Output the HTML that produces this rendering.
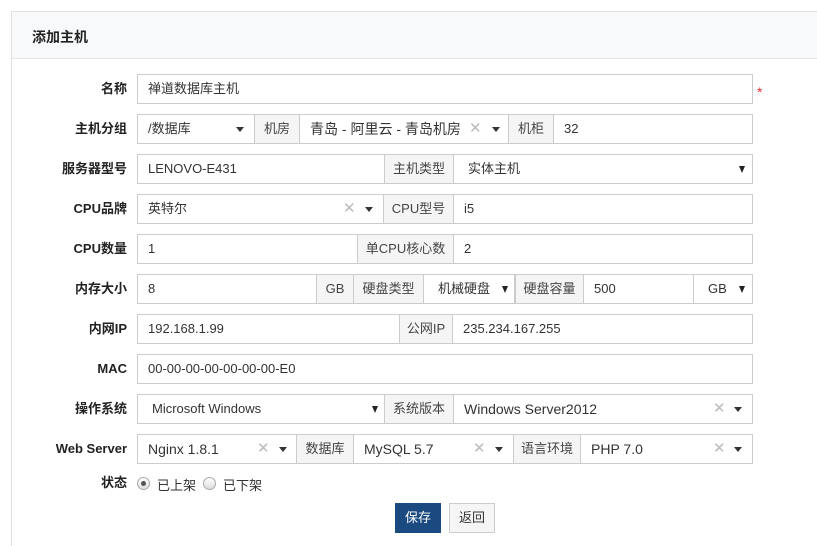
<!DOCTYPE html><html><head><meta charset="utf-8"><style>
html,body{margin:0;width:817px;height:546px;overflow:hidden}
body{background:#fff;font-family:"Liberation Sans","Noto Sans CJK SC",sans-serif;font-size:13px;color:#333;position:relative}
.panel{position:absolute;left:11px;top:11px;width:820px;height:545px;border-left:1px solid #e0e0e0;border-top:1px solid #e0e0e0}
.hd{position:absolute;left:11px;top:11px;width:820px;height:46px;background:#f8f9fb;border:1px solid #e0e0e0;border-bottom:1px solid #e5e5e5}
.hd span{position:absolute;left:20px;top:15px;font-weight:bold;font-size:14px;color:#222}
.b{position:absolute;height:28px;border:1px solid #ccc;line-height:28px;box-sizing:content-box;white-space:nowrap}
.a{background:#f5f5f5;text-align:center;color:#444}
.i{background:#fff;padding-left:10px}
.l{position:absolute;width:127px;text-align:right;font-weight:bold;color:#222;line-height:30px}
.x{position:absolute;color:#bbb;font-size:15px}
.ar{position:absolute;width:0;height:0;border-left:4px solid transparent;border-right:4px solid transparent;border-top:5px solid #333}
.ar2{position:absolute;width:0;height:0;border-left:3.5px solid transparent;border-right:3.5px solid transparent;border-top:7px solid #222}
.rad{position:absolute;width:11px;height:11px;border:1px solid #aaa;border-radius:50%;background:linear-gradient(#fff,#ddd)}
</style></head><body>
<div class="panel"></div>
<div class="hd"><span>添加主机</span></div>

<div class="l" style="top:74px">名称</div>
<div class="b i" style="left:137px;top:74px;width:604px">禅道数据库主机</div>
<div style="position:absolute;left:757px;top:84px;color:#e33;font-size:14px">*</div>

<div class="l" style="top:114px">主机分组</div>
<div class="b i" style="left:137px;top:114px;width:106px">/数据库</div><div class="ar" style="left:236px;top:127px"></div>
<div class="b a" style="left:254px;top:114px;width:44px">机房</div>
<div class="b i" style="left:299px;top:114px;width:198px;font-size:14px">青岛 - 阿里云 - 青岛机房</div><div class="x" style="left:469px;top:119px">✕</div><div class="ar" style="left:492px;top:127px"></div>
<div class="b a" style="left:508px;top:114px;width:44px">机柜</div>
<div class="b i" style="left:553px;top:114px;width:188px">32</div>

<div class="l" style="top:154px">服务器型号</div>
<div class="b i" style="left:137px;top:154px;width:236px">LENOVO-E431</div>
<div class="b a" style="left:384px;top:154px;width:68px">主机类型</div>
<div class="b i" style="left:453px;top:154px;padding-left:14px;width:284px">实体主机</div><div class="ar2" style="left:739px;top:166px"></div>

<div class="l" style="top:194px">CPU品牌</div>
<div class="b i" style="left:137px;top:194px;width:235px">英特尔</div><div class="x" style="left:343px;top:199px">✕</div><div class="ar" style="left:365px;top:207px"></div>
<div class="b a" style="left:383px;top:194px;width:69px">CPU型号</div>
<div class="b i" style="left:453px;top:194px;width:288px">i5</div>

<div class="l" style="top:234px">CPU数量</div>
<div class="b i" style="left:137px;top:234px;width:209px">1</div>
<div class="b a" style="left:357px;top:234px;width:95px">单CPU核心数</div>
<div class="b i" style="left:453px;top:234px;width:288px">2</div>

<div class="l" style="top:274px">内存大小</div>
<div class="b i" style="left:137px;top:274px;width:168px">8</div>
<div class="b a" style="left:316px;top:274px;width:36px">GB</div>
<div class="b a" style="left:353px;top:274px;width:69px">硬盘类型</div>
<div class="b i" style="left:423px;top:274px;padding-left:14px;width:76px">机械硬盘</div><div class="ar2" style="left:502px;top:286px"></div>
<div class="b a" style="left:515px;top:274px;width:67px">硬盘容量</div>
<div class="b i" style="left:583px;top:274px;width:99px">500</div>
<div class="b i" style="left:693px;top:274px;padding-left:14px;width:44px">GB</div><div class="ar2" style="left:739px;top:286px"></div>

<div class="l" style="top:314px">内网IP</div>
<div class="b i" style="left:137px;top:314px;width:251px">192.168.1.99</div>
<div class="b a" style="left:399px;top:314px;width:52px">公网IP</div>
<div class="b i" style="left:452px;top:314px;width:289px">235.234.167.255</div>

<div class="l" style="top:354px">MAC</div>
<div class="b i" style="left:137px;top:354px;width:604px">00-00-00-00-00-00-00-E0</div>

<div class="l" style="top:394px">操作系统</div>
<div class="b i" style="left:137px;top:394px;width:232px;padding-left:14px">Microsoft Windows</div><div class="ar2" style="left:372px;top:406px"></div>
<div class="b a" style="left:384px;top:394px;width:68px">系统版本</div>
<div class="b i" style="left:453px;top:394px;width:288px;font-size:14px">Windows Server2012</div><div class="x" style="left:713px;top:399px">✕</div><div class="ar" style="left:734px;top:407px"></div>

<div class="l" style="top:434px">Web Server</div>
<div class="b i" style="left:137px;top:434px;width:148px;font-size:14px">Nginx 1.8.1</div><div class="x" style="left:257px;top:439px">✕</div><div class="ar" style="left:279px;top:447px"></div>
<div class="b a" style="left:296px;top:434px;width:56px">数据库</div>
<div class="b i" style="left:353px;top:434px;width:149px;font-size:14px">MySQL 5.7</div><div class="x" style="left:473px;top:439px">✕</div><div class="ar" style="left:495px;top:447px"></div>
<div class="b a" style="left:513px;top:434px;width:66px">语言环境</div>
<div class="b i" style="left:580px;top:434px;width:161px;font-size:14px">PHP 7.0</div><div class="x" style="left:713px;top:439px">✕</div><div class="ar" style="left:734px;top:447px"></div>

<div class="l" style="top:468px">状态</div>
<div class="rad" style="left:137px;top:477px"><div style="position:absolute;left:3px;top:3px;width:5px;height:5px;border-radius:50%;background:#555"></div></div>
<div style="position:absolute;left:157px;top:475px">已上架</div>
<div class="rad" style="left:203px;top:477px"></div>
<div style="position:absolute;left:223px;top:475px">已下架</div>

<div style="position:absolute;left:395px;top:503px;width:46px;height:30px;background:#1a4a80;color:#fff;text-align:center;line-height:30px">保存</div>
<div style="position:absolute;left:449px;top:503px;width:44px;height:28px;border:1px solid #ccc;background:#f5f5f5;text-align:center;line-height:28px">返回</div>
</body></html>
